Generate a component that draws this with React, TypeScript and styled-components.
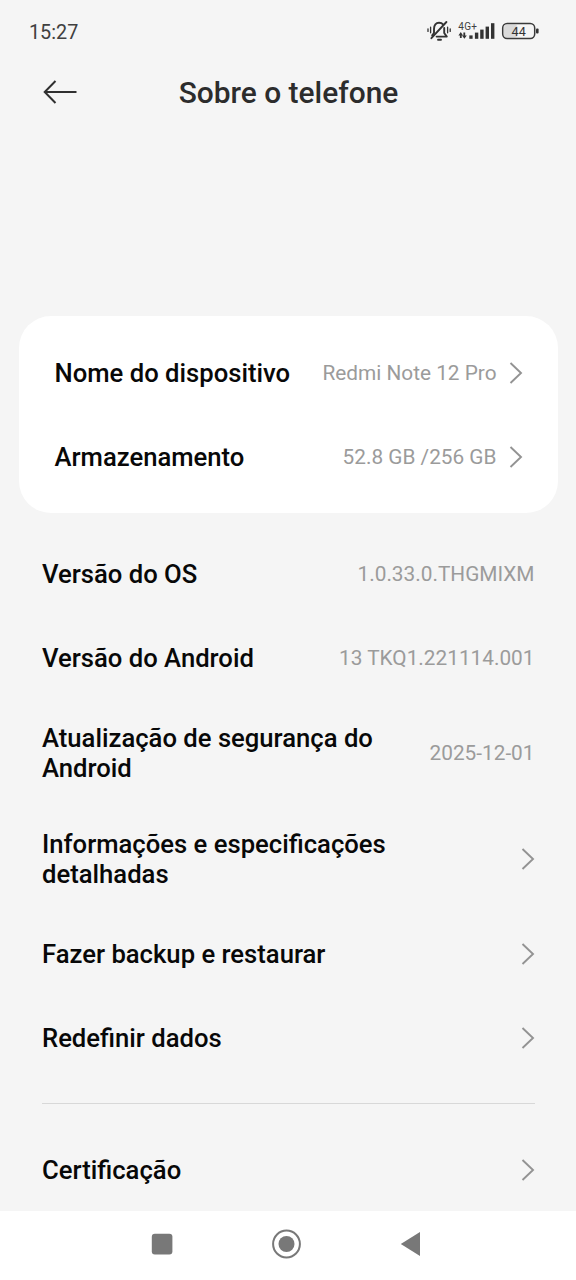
import React from "react";
import styled, { createGlobalStyle } from "styled-components";

const GlobalStyle = createGlobalStyle`
  * { box-sizing: border-box; }
  body { margin: 0; background: #f5f5f5; font-family: Roboto, "Liberation Sans", sans-serif; }
`;

const Screen = styled.div`
  width: 576px;
  height: 1280px;
  display: flex;
  flex-direction: column;
  overflow: hidden;
  background: #f5f5f5;
`;

const StatusBar = styled.div`
  height: 62px;
  flex: none;
  display: flex;
  align-items: center;
  justify-content: space-between;
  padding: 2px 35px 0 29px;
`;

const Clock = styled.span`
  font-size: 19.8px;
  color: #404040;
`;

const StatusIcons = styled.svg`
  display: block;
  width: 114px;
  height: 24px;
`;

const Header = styled.header`
  height: 62px;
  flex: none;
  display: grid;
  grid-template-columns: 100px 1fr 100px;
  align-items: center;
  padding-left: 1px;
`;

const BackArrow = styled.svg`
  width: 36px;
  height: 26px;
  margin-left: 41px;
  margin-bottom: 3px;
`;

const Title = styled.h1`
  margin: 0;
  text-align: center;
  font-size: 29.9px;
  line-height: 34px;
  font-weight: 500;
  color: #2c2c2c;
`;

const Card = styled.section`
  flex: none;
  margin: 192px 18px 0 19px;
  height: 197px;
  padding: 15px 35.5px 0 35.5px;
  border-radius: 32px;
  background: #fff;
`;

const List = styled.section<{ $last?: boolean }>`
  flex: none;
  height: ${(p) => (p.$last ? "107px" : "auto")};
  padding: ${(p) => (p.$last ? "24px" : "19px")} 41px 0 42px;
`;

const Row = styled.div<{ $tall?: boolean }>`
  height: ${(p) => (p.$tall ? 106.3 : 83.8)}px;
  display: flex;
  align-items: center;
  justify-content: space-between;
`;

const Label = styled.span<{ $narrow?: boolean }>`
  font-size: 25.65px;
  line-height: 30px;
  font-weight: 500;
  color: #080808;
  padding-top: 0.8px;
  max-width: ${(p) => (p.$narrow ? "360px" : "none")};
`;

const Value = styled.span<{ $end?: boolean }>`
  margin-left: auto;
  padding-top: 1px;
  padding-right: ${(p) => (p.$end ? 0.5 : 0)}px;
  font-size: 20.8px;
  line-height: 26px;
  color: #9b9b9b;
  white-space: nowrap;
`;

const ChevronIcon = styled.svg`
  width: 14px;
  height: 24px;
  margin-left: 12px;
  flex: none;
`;

const Divider = styled.hr`
  flex: none;
  width: 493px;
  height: 1px;
  margin: 23px 0 0 42px;
  border: 0;
  background: #d8d8d8;
`;

const NavBar = styled.nav`
  flex: none;
  height: 69px;
  margin-top: auto;
  display: flex;
  align-items: center;
  justify-content: space-between;
  padding: 0 154px 3px 151px;
  background: #fff;
`;

const NavIcon = styled.svg<{ $w: number }>`
  width: ${(p) => p.$w}px;
  height: 30px;
`;

function Chevron() {
  return (
    <ChevronIcon viewBox="0 0 14 24" fill="none" stroke="#939393" strokeWidth="1.9">
      <path d="M1.5 2 L12 12 L1.5 22" />
    </ChevronIcon>
  );
}

type Item = { label: string; value?: string; tall?: boolean; link?: boolean };

function SettingRow({ label, value, tall, link }: Item) {
  return (
    <Row $tall={tall}>
      <Label $narrow={tall}>{label}</Label>
      {value && <Value $end={!link}>{value}</Value>}
      {link && <Chevron />}
    </Row>
  );
}

const device: Item[] = [
  { label: "Nome do dispositivo", value: "Redmi Note 12 Pro", link: true },
  { label: "Armazenamento", value: "52.8 GB /256 GB", link: true },
];

const details: Item[] = [
  { label: "Versão do OS", value: "1.0.33.0.THGMIXM" },
  { label: "Versão do Android", value: "13 TKQ1.221114.001" },
  { label: "Atualização de segurança do Android", value: "2025-12-01", tall: true },
  { label: "Informações e especificações detalhadas", tall: true, link: true },
  { label: "Fazer backup e restaurar", link: true },
  { label: "Redefinir dados", link: true },
];

export default function App() {
  return (
    <Screen>
      <GlobalStyle />
      <StatusBar>
        <Clock>15:27</Clock>
        <StatusIcons viewBox="0 0 114 24" fontFamily="Roboto, sans-serif">
          <g fill="none" stroke="#333" strokeWidth="1.9" strokeLinecap="round" strokeLinejoin="round">
            <path d="M5.2 15.4 L7 13 V9 C7 5 9 2.8 12 2.8 C13.8 2.8 15.2 3.4 16 4.4" />
            <path d="M17.2 8 V13 L19.8 16.6 H9.6" />
            <path d="M19.4 2 L4.4 18.2" />
            <path d="M11 19.8 H14" />
            <path d="M3.6 7.2 V12.8 M1 8.8 V11.4 M20.6 7.2 V12.8 M23.2 8.8 V11.4" strokeWidth="1.3" />
          </g>
          <text x="31.2" y="9.8" fontSize="10" fill="#404040" textLength="18.8">4G+</text>
          <g fill="#333">
            <path d="M31.4 15.4 L33.8 12 L36 15.4 H34.7 V18 H32.9 V15.4 Z" />
            <path d="M35 15.4 H36.4 V12.6 H38.2 V15.4 H39.8 L37.4 18.8 Z" />
            <rect x="42.3" y="15.4" width="3.3" height="3.4" />
            <rect x="47.9" y="12.6" width="3.4" height="6.2" />
            <rect x="53.2" y="9.6" width="3.4" height="9.2" />
            <rect x="58.6" y="6.6" width="3.4" height="12.2" />
            <rect x="64" y="3.2" width="3.4" height="15.6" />
          </g>
          <rect x="77" y="4.8" width="13.6" height="12.6" rx="3" fill="#dadada" />
          <rect x="75.7" y="3.5" width="32" height="15" rx="4.4" fill="none" stroke="#3a3a3a" strokeWidth="1.5" />
          <rect x="109" y="8.6" width="2.6" height="4.8" rx="1" fill="#333" />
          <text x="91.7" y="15.5" fontSize="12.6" fill="#333" textAnchor="middle">44</text>
        </StatusIcons>
      </StatusBar>
      <Header>
        <BackArrow viewBox="0 0 36 26" fill="none" stroke="#303030" strokeWidth="2">
          <path d="M34.5 13 H3 M13.5 2 L2.7 13 L13.5 24" />
        </BackArrow>
        <Title>Sobre o telefone</Title>
      </Header>
      <Card>
        {device.map((item) => (
          <SettingRow key={item.label} {...item} />
        ))}
      </Card>
      <List>
        {details.map((item) => (
          <SettingRow key={item.label} {...item} />
        ))}
      </List>
      <Divider />
      <List $last>
        <SettingRow label="Certificação" link />
      </List>
      <NavBar>
        <NavIcon $w={22} viewBox="0 0 22 30">
          <rect x="0.8" y="4.8" width="20.6" height="20.6" rx="3" fill="#787878" />
        </NavIcon>
        <NavIcon $w={30} viewBox="0 0 30 30">
          <circle cx="14.5" cy="15" r="13.4" fill="none" stroke="#787878" strokeWidth="2" />
          <circle cx="14.5" cy="15" r="8" fill="#787878" />
        </NavIcon>
        <NavIcon $w={22} viewBox="0 0 22 30">
          <path d="M0.8 15 L20 3 V27 Z" fill="#787878" />
        </NavIcon>
      </NavBar>
    </Screen>
  );
}
